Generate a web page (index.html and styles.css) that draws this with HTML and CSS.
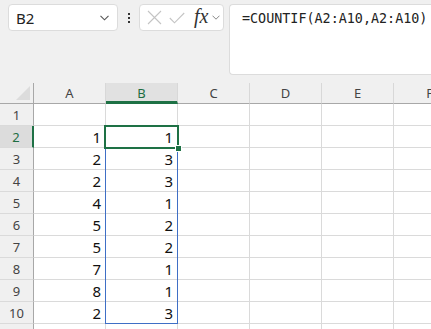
FILE: index.html
```html
<!DOCTYPE html>
<html lang="en">

<head>
    <meta charset="UTF-8">
    <meta name="viewport" content="width=device-width, initial-scale=1.0">
    <title>COUNTIF</title>
    <link rel="stylesheet" href="styles.css">
</head>

<body>
    <!-- 上方: 名称框 + 编辑栏 -->
    <div class="topbar">
        <div class="name-box">
            <span class="name-text">B2</span>
            <svg class="chev" width="9" height="6" viewBox="0 0 9 6"><path d="M0.5 0.8 L4.5 4.8 L8.5 0.8" fill="none" stroke="#555" stroke-width="1.1"/></svg>
        </div>
        <div class="dots"><i></i><i></i><i></i></div>
        <div class="fx-box">
            <svg class="ico x" width="15" height="15" viewBox="0 0 15 15"><path d="M1 1 L14 14 M14 1 L1 14" stroke="#c4c4c4" stroke-width="1.1"/></svg>
            <svg class="ico ok" width="16" height="12" viewBox="0 0 16 12"><path d="M0.8 6 L5.5 10.8 L15.2 1" fill="none" stroke="#c4c4c4" stroke-width="1.1"/></svg>
            <span class="fx">fx</span>
            <svg class="chev small" width="8" height="5" viewBox="0 0 8 5"><path d="M0.5 0.7 L4 4.2 L7.5 0.7" fill="none" stroke="#888" stroke-width="1"/></svg>
        </div>
        <div class="formula">=COUNTIF(A2:A10,A2:A10)</div>
    </div>

    <!-- 工作表 -->
    <div class="sheet">
        <div class="grid">
            <div class="corner"><span class="tri"></span></div>
            <div class="col-head">A</div>
            <div class="col-head active">B</div>
            <div class="col-head">C</div>
            <div class="col-head">D</div>
            <div class="col-head">E</div>
            <div class="col-head last">F</div>

            <div class="row-head">1</div><div class="cell"></div><div class="cell"></div><div class="cell"></div><div class="cell"></div><div class="cell"></div><div class="cell"></div>
            <div class="row-head active">2</div><div class="cell">1</div><div class="cell">1</div><div class="cell"></div><div class="cell"></div><div class="cell"></div><div class="cell"></div>
            <div class="row-head">3</div><div class="cell">2</div><div class="cell">3</div><div class="cell"></div><div class="cell"></div><div class="cell"></div><div class="cell"></div>
            <div class="row-head">4</div><div class="cell">2</div><div class="cell">3</div><div class="cell"></div><div class="cell"></div><div class="cell"></div><div class="cell"></div>
            <div class="row-head">5</div><div class="cell">4</div><div class="cell">1</div><div class="cell"></div><div class="cell"></div><div class="cell"></div><div class="cell"></div>
            <div class="row-head">6</div><div class="cell">5</div><div class="cell">2</div><div class="cell"></div><div class="cell"></div><div class="cell"></div><div class="cell"></div>
            <div class="row-head">7</div><div class="cell">5</div><div class="cell">2</div><div class="cell"></div><div class="cell"></div><div class="cell"></div><div class="cell"></div>
            <div class="row-head">8</div><div class="cell">7</div><div class="cell">1</div><div class="cell"></div><div class="cell"></div><div class="cell"></div><div class="cell"></div>
            <div class="row-head">9</div><div class="cell">8</div><div class="cell">1</div><div class="cell"></div><div class="cell"></div><div class="cell"></div><div class="cell"></div>
            <div class="row-head">10</div><div class="cell">2</div><div class="cell">3</div><div class="cell"></div><div class="cell"></div><div class="cell"></div><div class="cell"></div>
            <div class="row-head"></div><div class="cell"></div><div class="cell"></div><div class="cell"></div><div class="cell"></div><div class="cell"></div><div class="cell"></div>
        </div>
        <!-- 引用区域 B3:B10 与活动单元格 -->
        <div class="range"></div>
        <div class="active-cell"><span class="handle"></span></div>
    </div>
</body>

</html>
```

FILE: styles.css
```css
* {
    margin: 0;
    padding: 0;
    box-sizing: border-box;
}

html,
body {
    overflow: hidden;
}

body {
    background: #f0f0f0;
    font-family: "Noto Sans", "Liberation Sans", sans-serif;
    color: #222;
    width: 431px;
    height: 329px;
}

/* 上方工具栏 */
.topbar {
    height: 83px;
    display: flex;
    align-items: flex-start;
    padding: 4px 0 0 8px;
}

.name-box {
    width: 110px;
    height: 27px;
    background: #fff;
    border: 1px solid #dcdcdc;
    border-radius: 4px;
    display: flex;
    align-items: center;
    justify-content: space-between;
    padding: 0 8px 0 7px;
}

.name-text {
    font-size: 15px;
    color: #222;
}

.dots {
    width: 21px;
    height: 27px;
    display: flex;
    flex-direction: column;
    align-items: center;
    justify-content: center;
    gap: 2px;
}

.dots i {
    display: block;
    width: 2px;
    height: 2px;
    background: #333;
}

.fx-box {
    width: 85px;
    height: 27px;
    background: #fff;
    border: 1px solid #dcdcdc;
    border-radius: 4px;
    display: flex;
    align-items: center;
    padding: 0 0 0 7px;
}

.ico {
    display: block;
}

.ico.x {
    margin-right: 7px;
}

.ico.ok {
    margin-right: 9px;
}

.fx {
    font-family: "Liberation Serif", serif;
    font-style: italic;
    font-size: 20px;
    line-height: 20px;
    color: #333;
    margin: -3px 4px 0 0;
}

.formula {
    flex: 1;
    margin-left: 5px;
    height: 71px;
    background: #fff;
    border: 1px solid #dcdcdc;
    border-right: none;
    border-radius: 4px 0 0 4px;
    font-family: "DejaVu Sans Mono", monospace;
    font-size: 13.4px;
    padding: 6px 0 0 12px;
    color: #222;
    white-space: nowrap;
}

/* 工作表 */
.sheet {
    position: relative;
    height: 246px;
    overflow: hidden;
}

.grid {
    display: grid;
    grid-template-columns: 34px repeat(6, 72px);
    grid-template-rows: 21px repeat(11, 22px);
    background: #fff;
}

.corner {
    background: #f0f0f0;
    border-right: 1px solid #a8a8a8;
    border-bottom: 1px solid #a8a8a8;
    position: relative;
}

.tri {
    position: absolute;
    right: 3px;
    bottom: 3px;
    width: 0;
    height: 0;
    border-left: 14px solid transparent;
    border-bottom: 14px solid #dcdcdc;
}

.col-head {
    background: #f0f0f0;
    border-right: 1px solid #d8d8d8;
    border-bottom: 1px solid #a8a8a8;
    text-align: center;
    font-size: 13px;
    line-height: 20px;
    color: #444;
}

.col-head.active {
    background: #e1e1e1;
    color: #1e6e42;
    border-bottom: 3px solid #1e7145;
}

.row-head {
    background: #f0f0f0;
    border-right: 1px solid #a8a8a8;
    border-bottom: 1px solid #dadada;
    text-align: center;
    font-size: 13px;
    line-height: 22px;
    color: #444;
}

.row-head.active {
    background: #dcdcdc;
    color: #1e6e42;
    border-right: 2px solid #1e7145;
}

.cell {
    border-right: 1px solid #dadada;
    border-bottom: 1px solid #dadada;
    text-align: right;
    padding: 0 4px 0 0;
    font-size: 15px;
    line-height: 22px;
    color: #111;
}

.range {
    position: absolute;
    left: 105px;
    top: 65px;
    width: 73px;
    height: 176px;
    border: 1px solid #3f6fc6;
    pointer-events: none;
}

.active-cell {
    position: absolute;
    left: 104px;
    top: 42px;
    width: 75px;
    height: 24px;
    border: 2px solid #1e7145;
}

.handle {
    position: absolute;
    right: -5px;
    bottom: -5px;
    width: 7px;
    height: 7px;
    background: #1e7145;
    border: 1px solid #fff;
}
```
